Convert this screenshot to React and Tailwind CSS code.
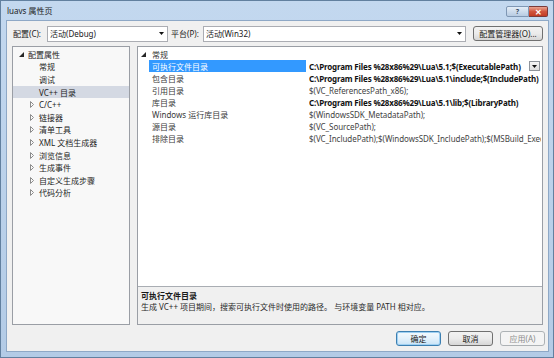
import React from 'react';

const treeItems = [
  { label: '常规', kind: 'leaf' },
  { label: '调试', kind: 'leaf' },
  { label: 'VC++ 目录', kind: 'leaf', selected: true },
  { label: 'C/C++', kind: 'node' },
  { label: '链接器', kind: 'node' },
  { label: '清单工具', kind: 'node' },
  { label: 'XML 文档生成器', kind: 'node' },
  { label: '浏览信息', kind: 'node' },
  { label: '生成事件', kind: 'node' },
  { label: '自定义生成步骤', kind: 'node' },
  { label: '代码分析', kind: 'node' },
];

const props = [
  { name: '可执行文件目录', value: 'C:\\Program Files %28x86%29\\Lua\\5.1;$(ExecutablePath)', bold: true, selected: true },
  { name: '包含目录', value: 'C:\\Program Files %28x86%29\\Lua\\5.1\\include;$(IncludePath)', bold: true },
  { name: '引用目录', value: '$(VC_ReferencesPath_x86);' },
  { name: '库目录', value: 'C:\\Program Files %28x86%29\\Lua\\5.1\\lib;$(LibraryPath)', bold: true },
  { name: 'Windows 运行库目录', value: '$(WindowsSDK_MetadataPath);' },
  { name: '源目录', value: '$(VC_SourcePath);' },
  { name: '排除目录', value: '$(VC_IncludePath);$(WindowsSDK_IncludePath);$(MSBuild_ExecutablePath);$(VC_LibraryPath_x86);' },
];

// small glyphs
const ExpandedArrow = () => (
  <svg width="5" height="5" viewBox="0 0 5 5" className="shrink-0">
    <path d="M5 0 L5 5 L0 5 Z" fill="#262626" />
  </svg>
);

const CollapsedArrow = () => (
  <svg width="4" height="7" viewBox="0 0 4 7" className="shrink-0">
    <path d="M0.5 0.5 L3.5 3.5 L0.5 6.5 Z" fill="none" stroke="#8c8c8c" strokeWidth="1" />
  </svg>
);

const DropArrow = () => (
  <svg width="5" height="3" viewBox="0 0 5 3">
    <path d="M0 0 L5 0 L2.5 3 Z" fill="#111" />
  </svg>
);

function Combo({ text, width }) {
  return (
    <div className={`flex items-center h-[16px] ${width} bg-white border border-[#abadb3] pl-[2px] pr-[3px]`}>
      <span className="flex-1 text-[#222] whitespace-nowrap">{text}</span>
      <DropArrow />
    </div>
  );
}

function WinButton({ children, variant, width }) {
  const styles = {
    normal: 'border-[#707070] bg-gradient-to-b from-[#f2f2f2] via-[#ebebeb] to-[#d6d6d6] text-[#1a1a1a]',
    focus: 'border-[#3c7fb1] bg-gradient-to-b from-[#f4fafd] via-[#e3f1fb] to-[#c9e4f7] text-[#1a1a1a] shadow-[inset_0_0_0_1px_#9fd0f2]',
    disabled: 'border-[#adb2b5] bg-[#f4f4f4] text-[#8d8d8d]',
  };
  return (
    <div className={`flex items-center justify-center h-[15px] ${width} border rounded-[3px] ${styles[variant]}`}>
      {children}
    </div>
  );
}

export default function App() {
  return (
    <div className="w-[554px] h-[358px] flex flex-col bg-gradient-to-b from-[#c3d8ef] to-[#b3cbe6] border border-[#62809f] font-['Noto_Sans','Noto_Sans_CJK_SC',sans-serif] text-[8px] leading-[11px] overflow-hidden">
      {/* title bar */}
      <div className="h-[19px] flex items-start shrink-0">
        <span className="pl-[6px] pt-[4px] text-[#1c1c1c]">luavs 属性页</span>
        <div className="flex-1" />
        <div className="flex mt-[5px] mr-[5px]">
          <div className="w-[23px] h-[11px] flex items-center justify-center border border-[#7f97b4] rounded-l-[2px] bg-gradient-to-b from-[#e4edf7] to-[#b7cbe2] text-[#3c4f66] text-[7px] font-bold">?</div>
          <div className="w-[19px] h-[11px] flex items-center justify-center border border-l-0 border-[#7a3a3a] rounded-r-[2px] bg-gradient-to-b from-[#e8a493] via-[#d0543d] to-[#c23b24] text-white text-[8px] font-bold">✕</div>
        </div>
      </div>

      {/* dialog body */}
      <div className="flex-1 ml-[5px] mr-[4px] mb-[5px] bg-[#f0f0f0] border border-[#8ea8c6] flex flex-col">
        {/* config row */}
        <div className="h-[25px] flex items-center pl-[6px] shrink-0 text-[#1a1a1a]">
          <span className="w-[34px]">配置(C):</span>
          <Combo text="活动(Debug)" width="w-[121px]" />
          <span className="w-[32px] ml-[3px]">平台(P):</span>
          <Combo text="活动(Win32)" width="w-[263px]" />
          <div className="ml-[7px]">
            <WinButton variant="normal" width="w-[70px]">配置管理器(O)...</WinButton>
          </div>
        </div>

        {/* panels */}
        <div className="h-[279px] flex pl-[5px] gap-[7px] shrink-0">
          {/* tree */}
          <div className="w-[118px] border border-[#9a9ea5] bg-[#f8f8f8] pt-[1px] text-[#1e1e1e]">
            <div className="h-[12.6px] flex items-center pl-[6px] gap-[4px]">
              <ExpandedArrow />
              <span>配置属性</span>
            </div>
            {treeItems.map((it) => (
              <div
                key={it.label}
                className={`h-[12.6px] flex items-center ${it.selected ? 'bg-[#d4d9e3]' : ''}`}
              >
                <div className="w-[26px] flex justify-end pr-[5px] shrink-0">
                  {it.kind === 'node' ? <CollapsedArrow /> : null}
                </div>
                <span className="whitespace-nowrap">{it.label}</span>
              </div>
            ))}
          </div>

          {/* property grid */}
          <div className="w-[406px] flex flex-col border border-[#9a9ea5]">
            <div className="flex-1 bg-white pt-[1px] overflow-hidden">
              <div className="h-[12px] flex items-center">
                <div className="w-[11px] flex justify-center shrink-0">
                  <ExpandedArrow />
                </div>
                <span className="pl-[3px] text-[#333]">常规</span>
              </div>
              {props.map((p) => (
                <div key={p.name} className="h-[12px] flex items-center">
                  <div className="w-[11px] shrink-0" />
                  <div
                    className={`w-[157px] h-full flex items-center pl-[3px] shrink-0 whitespace-nowrap ${
                      p.selected ? 'bg-[#3399ff] text-white' : 'text-[#3a3a3a]'
                    }`}
                  >
                    {p.name}
                  </div>
                  <div className="flex-1 h-full flex items-center pl-[2px] pr-[1px] min-w-0 ml-[1px]">
                    <span
                      className={`flex-1 whitespace-nowrap overflow-hidden ${
                        p.bold ? 'font-bold text-[#111] tracking-[-0.17px]' : 'text-[#444] tracking-[-0.05px]'
                      }`}
                    >
                      {p.value}
                    </span>
                    {p.selected && (
                      <div className="w-[11px] h-[10px] mr-[1px] flex items-center justify-center border border-[#8f949b] bg-gradient-to-b from-[#f6f6f6] to-[#dedede] shrink-0">
                        <DropArrow />
                      </div>
                    )}
                  </div>
                </div>
              ))}
            </div>
            <div className="h-[38px] shrink-0 border-t border-[#a9adb3] bg-[#f0f0f0] pl-[3px] pt-[3px] flex flex-col">
              <span className="font-bold text-[#1a1a1a]">可执行文件目录</span>
              <span className="text-[#2a2a2a] whitespace-nowrap">
                生成 VC++ 项目期间，搜索可执行文件时使用的路径。 与环境变量 PATH 相对应。
              </span>
            </div>
          </div>
        </div>

        {/* buttons */}
        <div className="flex-1 flex items-center justify-end gap-[7px] pr-[3px]">
          <WinButton variant="focus" width="w-[45px]">确定</WinButton>
          <WinButton variant="normal" width="w-[45px]">取消</WinButton>
          <WinButton variant="disabled" width="w-[45px]">应用(A)</WinButton>
        </div>
      </div>
    </div>
  );
}
